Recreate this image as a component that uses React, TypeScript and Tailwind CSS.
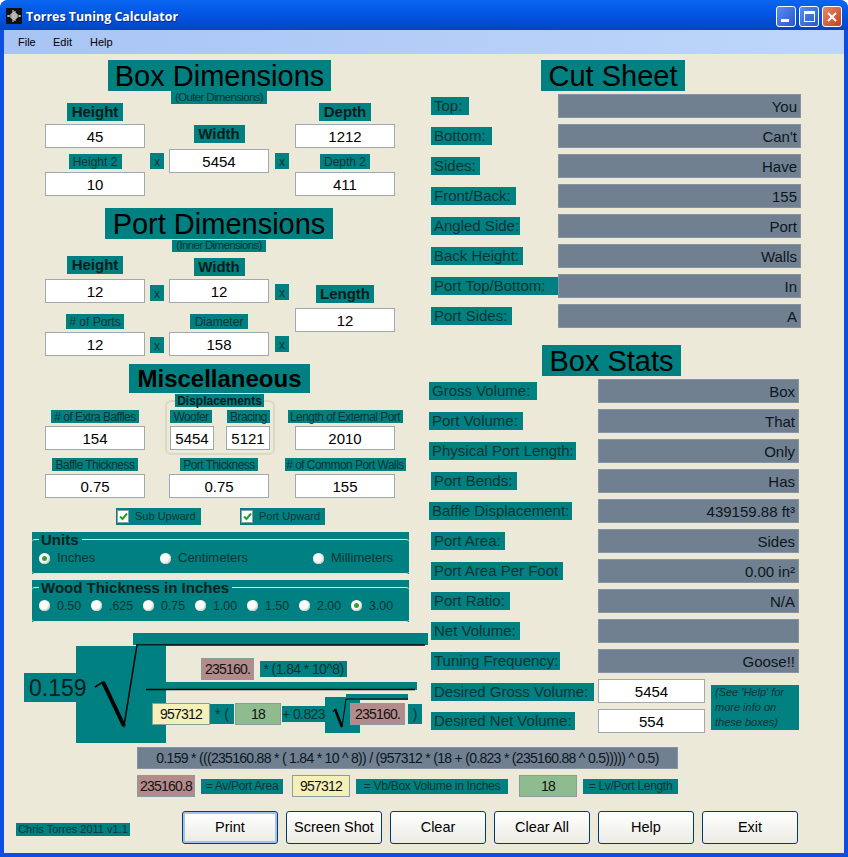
import React from 'react';

const Lbl = ({ w, h = 18, cls = 'text-[15px]', children }: { w: number; h?: number; cls?: string; children: React.ReactNode }) => (
  <div
    className={`bg-[#008080] text-[#0a3434] flex items-center justify-center whitespace-nowrap shrink-0 ${cls}`}
    style={{ width: w, height: h }}
  >
    {children}
  </div>
);

const Bold = ({ w, children }: { w: number; children: React.ReactNode }) => (
  <Lbl w={w} cls="text-[15px] font-bold text-[#021c1c] pt-[1px]">{children}</Lbl>
);

const Small = ({ w, h = 15, children }: { w: number; h?: number; children: React.ReactNode }) => (
  <Lbl w={w} h={h} cls="text-[12px] pt-[1px]">{children}</Lbl>
);

const Tiny = ({ w, children }: { w: number; children: React.ReactNode }) => (
  <Lbl w={w} h={13} cls="text-[12px] tracking-[-0.55px]">{children}</Lbl>
);

const Heading = ({ w, children }: { w: number; children: React.ReactNode }) => (
  <div
    className="bg-[#008080] text-black text-[29px] h-[31px] pt-[2px] flex items-center justify-center whitespace-nowrap"
    style={{ width: w }}
  >
    {children}
  </div>
);

const Input = ({ value, w = 100 }: { value: string; w?: number }) => (
  <div
    className="h-[24px] pt-[2px] bg-white border border-[#a0a8b0] text-black text-[15px] flex items-center justify-center shrink-0"
    style={{ width: w }}
  >
    {value}
  </div>
);

const X = () => (
  <div className="w-[14px] h-[16px] pt-[1px] bg-[#008080] text-[#0a3434] text-[12px] flex items-center justify-center">x</div>
);

const Radio = ({ on }: { on?: boolean }) => (
  <span className="w-[11px] h-[11px] rounded-full bg-white shadow-[inset_-1px_-1px_2px_#c4c8b8] flex items-center justify-center shrink-0">
    {on && <span className="w-[5px] h-[5px] rounded-full bg-[#3f9a3a]" />}
  </span>
);

const Opt = ({ label, on, w, cls = 'text-[13px]' }: { label: string; on?: boolean; w: number; cls?: string }) => (
  <div className="flex items-center gap-[7px]" style={{ width: w }}>
    <Radio on={on} />
    <span className={`${cls} text-[#0a3434]`}>{label}</span>
  </div>
);

const Check = ({ label, cls }: { label: string; cls: string }) => (
  <div className={`h-[17px] w-[85px] bg-[#008080] flex items-center pl-[1px] gap-[6px] text-[11px] whitespace-nowrap text-[#0a3434] ${cls}`}>
    <span className="w-[12px] h-[13px] bg-white border border-[#8aa0a8] flex items-center justify-center shrink-0">
      <svg width="9" height="9" viewBox="0 0 9 9">
        <path d="M1 4.5 L3.5 7 L8 1.5" fill="none" stroke="#21a121" strokeWidth="2" />
      </svg>
    </span>
    {label}
  </div>
);

const Panel = ({ title, children }: { title: string; children: React.ReactNode }) => (
  <div className="ml-[28px] w-[377px] h-[42px] bg-[#008080] pt-[7px]">
    <div className="relative h-[35px] border-y border-[#d4e8e4] rounded-[3px] flex items-center pt-[3px] pl-[7px]">
      <span className="absolute left-[7px] -top-[7px] bg-[#008080] pl-[2px] pr-[3px] text-[15px] leading-[14px] font-bold text-[#051f1f]">
        {title}
      </span>
      {children}
    </div>
  </div>
);

const Value = ({ w, children }: { w: number; children?: React.ReactNode }) => (
  <div
    className="h-[24px] pt-[2px] bg-[#708090] border border-[#8494a4] text-[#0c1620] text-[15px] flex items-center justify-end pr-[3px] shrink-0"
    style={{ width: w }}
  >
    {children}
  </div>
);

const RowLbl = ({ w, children }: { w: number; children: React.ReactNode }) => (
  <Lbl w={w} cls="text-[15px] justify-start pl-[3px] pt-[1px]">{children}</Lbl>
);

const cut = [
  ['Top:', 38, 'You'],
  ['Bottom:', 61, "Can't"],
  ['Sides:', 49, 'Have'],
  ['Front/Back:', 85, '155'],
  ['Angled Side:', 89, 'Port'],
  ['Back Height:', 92, 'Walls'],
  ['Port Top/Bottom:', 127, 'In'],
  ['Port Sides:', 81, 'A'],
] as const;

const stats = [
  ['Gross Volume:', 108, 'Box', 0],
  ['Port Volume:', 94, 'That', 0],
  ['Physical Port Length:', 147, 'Only', 0],
  ['Port Bends:', 86, 'Has', 2],
  ['Baffle Displacement:', 143, '439159.88 ft³', 0],
  ['Port Area:', 74, 'Sides', 2],
  ['Port Area Per Foot', 132, '0.00 in²', 2],
  ['Port Ratio:', 79, 'N/A', 2],
  ['Net Volume:', 89, '', 2],
  ['Tuning Frequency:', 129, 'Goose!!', 2],
] as const;

const chip = 'h-[22px] pt-[1px] border border-[#8c9ca0] text-[14px] tracking-[-0.8px] text-[#111] flex items-center justify-center shrink-0';

const Formula = () => (
  <div className="relative h-[125px]">
    <div className="absolute left-[129px] top-[11px] w-[295px] h-[12px] bg-[#008080]" />
    <div className="absolute left-[72px] top-[24px] w-[90px] h-[97px] bg-[#008080]" />
    <div className="absolute left-[20px] top-[51px] w-[52px] h-[29px] bg-[#008080]" />
    <div className="absolute left-[162px] top-[60px] w-[251px] h-[8px] bg-[#008080]" />
    <div className="absolute left-[321px] top-[75px] w-[35px] h-[36px] bg-[#008080]" />
    <div className="absolute left-[342px] top-[72px] w-[62px] h-[6px] bg-[#008080]" />
    <span className="absolute left-[25px] top-[53px] text-[23px] leading-[27px] text-[#051f1f]">0.159</span>
    <svg className="absolute left-0 top-0" width="425" height="125" viewBox="0 0 425 125">
      <path d="M91 65 L99 60 L120 104 L133 23 H421" fill="none" stroke="#000" strokeWidth="1.5" />
      <path d="M99 60 L120 104" fill="none" stroke="#000" strokeWidth="4" />
      <path d="M142 67.5 H411" fill="none" stroke="#000" strokeWidth="1.5" />
      <path d="M329 90 L331 87 L338 105 L342 77 H404" fill="none" stroke="#000" strokeWidth="1" />
      <path d="M331 87 L338 105" fill="none" stroke="#000" strokeWidth="2.5" />
    </svg>
    <div className="relative pt-[36px] pl-[197px] flex items-center">
      <div className={`${chip} w-[53px] bg-[#b38b8b]`}>235160.</div>
      <Lbl w={87} h={16} cls="text-[14px] tracking-[-0.6px] ml-[6px]">* (1.84 * 10^8)</Lbl>
    </div>
    <div className="relative mt-[23px] pl-[148px] flex items-center">
      <div className={`${chip} w-[58px] bg-[#f5f0b8]`}>957312</div>
      <Lbl w={24} h={20} cls="text-[14px]">* (</Lbl>
      <div className={`${chip} w-[46px] ml-[1px] bg-[#8fbc8f]`}>18</div>
      <Lbl w={43} h={16} cls="text-[14px] tracking-[-0.6px] ml-[1px]">+ 0.823</Lbl>
      <div className={`${chip} w-[55px] ml-[25px] bg-[#b38b8b]`}>235160.</div>
      <Lbl w={14} h={20} cls="text-[14px] ml-[3px]">)</Lbl>
    </div>
  </div>
);

const App = () => {
  return (
    <div className="w-[848px] h-[857px] bg-white font-['Liberation_Sans',sans-serif] overflow-hidden">
      <div className="h-full rounded-t-[8px] bg-[#0a4fe0] flex flex-col">
        {/* title bar */}
        <div className="h-[30px] rounded-t-[8px] bg-gradient-to-b from-[#0a66f0] via-[#0254e2] to-[#0444c4] flex items-center pl-[6px] pr-[6px]">
          <svg className="mt-[2px]" width="16" height="16" viewBox="0 0 16 16">
            <rect width="16" height="16" fill="#111" />
            <path d="M1 8H3M3 7V9M5 6V10M6 5V11M7 2V14M8 4V12M9 3V13M10 5V11M11 6V10M13 7V9M13 8H15" stroke="#eee" strokeWidth="1" />
          </svg>
          <span className="ml-[4px] mt-[5px] text-white text-[12.4px] font-bold font-['Open_Sans',sans-serif] [text-shadow:1px_1px_0_#0a2a80]">
            Torres Tuning Calculator
          </span>
          <div className="ml-auto mt-[3px] flex gap-[3px]">
            <div className="w-[20px] h-[21px] rounded-[3px] border border-white bg-gradient-to-br from-[#5a8cf0] to-[#2a56d0] flex items-end pl-[4px] pb-[4px]">
              <span className="w-[8px] h-[3px] bg-white" />
            </div>
            <div className="w-[20px] h-[21px] rounded-[3px] border border-white bg-gradient-to-br from-[#5a8cf0] to-[#2a56d0] flex items-center justify-center">
              <span className="w-[11px] h-[11px] border border-white border-t-[3px]" />
            </div>
            <div className="w-[20px] h-[21px] rounded-[3px] border border-white bg-gradient-to-br from-[#e8866a] to-[#c0401c] flex items-center justify-center">
              <svg width="12" height="12" viewBox="0 0 12 12">
                <path d="M2 2L10 10M10 2L2 10" stroke="#fff" strokeWidth="2" />
              </svg>
            </div>
          </div>
        </div>

        <div className="flex-1 mx-[4px] mb-[4px] flex flex-col bg-[#ece9d8]">
          {/* menu */}
          <div className="h-[24px] bg-gradient-to-r from-[#a8c4f4] to-[#bed6fa] flex items-center text-[11px] text-black pl-[14px]">
            <span className="w-[35px]">File</span>
            <span className="w-[37px]">Edit</span>
            <span>Help</span>
          </div>

          <div className="flex h-[691px]">
            {/* left column */}
            <div className="w-[425px] shrink-0">
              <div className="mt-[6px] ml-[104px]"><Heading w={223}>Box Dimensions</Heading></div>
              <div className="ml-[167px]"><Lbl w={96} h={13} cls="text-[11.5px] tracking-[-0.65px]">(Outer Dimensions)</Lbl></div>

              <div className="-mt-[1px] ml-[41px] flex">
                <div className="w-[100px] flex flex-col items-center">
                  <Bold w={56}>Height</Bold>
                  <div className="mt-[3px]"><Input value="45" /></div>
                  <div className="mt-[6px]"><Small w={53}>Height 2</Small></div>
                  <div className="mt-[3px]"><Input value="10" /></div>
                </div>
                <div className="w-[24px] pt-[50px] flex justify-center"><X /></div>
                <div className="w-[100px] flex flex-col items-center pt-[22px]">
                  <Bold w={51}>Width</Bold>
                  <div className="mt-[6px]"><Input value="5454" /></div>
                </div>
                <div className="w-[26px] pt-[50px] flex justify-center"><X /></div>
                <div className="w-[100px] flex flex-col items-center">
                  <Bold w={52}>Depth</Bold>
                  <div className="mt-[3px]"><Input value="1212" /></div>
                  <div className="mt-[6px]"><Small w={50}>Depth 2</Small></div>
                  <div className="mt-[3px]"><Input value="411" /></div>
                </div>
              </div>

              <div className="mt-[12px] ml-[101px]"><Heading w={228}>Port Dimensions</Heading></div>
              <div className="mt-[1px] ml-[168px]"><Lbl w={94} h={12} cls="text-[11.5px] tracking-[-0.65px]">(Inner Dimensions)</Lbl></div>

              <div className="mt-[4px] ml-[41px] flex">
                <div className="w-[100px] flex flex-col items-center">
                  <Bold w={56}>Height</Bold>
                  <div className="mt-[5px]"><Input value="12" /></div>
                  <div className="mt-[11px]"><Small w={58}># of Ports</Small></div>
                  <div className="mt-[3px]"><Input value="12" /></div>
                </div>
                <div className="w-[24px] pt-[29px] flex flex-col items-center gap-[36px]"><X /><X /></div>
                <div className="w-[100px] flex flex-col items-center pt-[2px]">
                  <Bold w={51}>Width</Bold>
                  <div className="mt-[3px]"><Input value="12" /></div>
                  <div className="mt-[11px]"><Small w={58}>Diameter</Small></div>
                  <div className="mt-[3px]"><Input value="158" /></div>
                </div>
                <div className="w-[26px] pt-[28px] flex flex-col items-center gap-[36px]"><X /><X /></div>
                <div className="w-[100px] flex flex-col items-center pt-[29px]">
                  <Bold w={58}>Length</Bold>
                  <div className="mt-[5px]"><Input value="12" /></div>
                </div>
              </div>

              <div className="mt-[8px] ml-[125px] w-[181px] h-[29px] pt-[1px] bg-[#008080] text-black text-[24px] font-bold flex items-center justify-center">
                Miscellaneous
              </div>
              <div className="relative mt-[1px] ml-[171px] w-[89px]">
                <Lbl w={89} h={13} cls="text-[12px] font-bold text-[#021c1c]">Displacements</Lbl>
              </div>

              <div className="-mt-[7px] ml-[41px] flex">
                <div className="w-[100px] flex flex-col items-center pt-[10px]">
                  <Tiny w={88}># of Extra Baffles</Tiny>
                  <div className="mt-[3px]"><Input value="154" /></div>
                </div>
                <div className="ml-[20px] w-[110px] h-[55px] border-2 border-[#dcd8c6] rounded-[6px] px-[3px] pt-[8px]">
                  <div className="flex justify-between">
                    <Tiny w={42}>Woofer</Tiny>
                    <Tiny w={43}>Bracing</Tiny>
                  </div>
                  <div className="mt-[3px] flex justify-between">
                    <Input value="5454" w={44} />
                    <Input value="5121" w={44} />
                  </div>
                </div>
                <div className="ml-[20px] w-[100px] flex flex-col items-center pt-[10px]">
                  <Tiny w={115}>Length of External Port</Tiny>
                  <div className="mt-[3px]"><Input value="2010" /></div>
                </div>
              </div>

              <div className="mt-[3px] ml-[41px] flex">
                <div className="w-[100px] flex flex-col items-center">
                  <Tiny w={86}>Baffle Thickness</Tiny>
                  <div className="mt-[3px]"><Input value="0.75" /></div>
                </div>
                <div className="ml-[24px] w-[100px] flex flex-col items-center">
                  <Tiny w={78}>Port Thickness</Tiny>
                  <div className="mt-[3px]"><Input value="0.75" /></div>
                </div>
                <div className="ml-[26px] w-[100px] flex flex-col items-center">
                  <Tiny w={121}># of Common Port Walls</Tiny>
                  <div className="mt-[3px]"><Input value="155" /></div>
                </div>
              </div>

              <div className="mt-[10px] flex">
                <Check label="Sub Upward" cls="ml-[112px]" />
                <Check label="Port Upward" cls="ml-[39px]" />
              </div>

              <div className="mt-[7px]">
                <Panel title="Units">
                  <Opt label="Inches" on w={121} />
                  <Opt label="Centimeters" w={153} />
                  <Opt label="Millimeters" w={90} />
                </Panel>
              </div>
              <div className="mt-[6px]">
                <Panel title="Wood Thickness in Inches">
                  <Opt label="0.50" w={52} cls="text-[12.4px]" />
                  <Opt label=".625" w={52} cls="text-[12.4px]" />
                  <Opt label="0.75" w={52} cls="text-[12.4px]" />
                  <Opt label="1.00" w={52} cls="text-[12.4px]" />
                  <Opt label="1.50" w={52} cls="text-[12.4px]" />
                  <Opt label="2.00" w={52} cls="text-[12.4px]" />
                  <Opt label="3.00" on w={50} cls="text-[12.4px]" />
                </Panel>
              </div>

              <Formula />
            </div>

            {/* right column */}
            <div className="flex-1 relative">
              <div className="mt-[6px] ml-[112px]"><Heading w={144}>Cut Sheet</Heading></div>
              <div className="mt-[3px] flex flex-col gap-[6px]">
                {cut.map(([label, w, val]) => (
                  <div key={label} className="h-[24px] flex items-center pl-[2px]">
                    <div className="w-[127px]">
                      <RowLbl w={w}>{label}</RowLbl>
                    </div>
                    <Value w={243}>{val}</Value>
                  </div>
                ))}
              </div>

              <div className="mt-[17px] ml-[113px]"><Heading w={139}>Box Stats</Heading></div>
              <div className="mt-[3px] flex flex-col gap-[6px]">
                {stats.map(([label, w, val, pad]) => (
                  <div key={label} className="h-[24px] flex items-center">
                    <div className="w-[169px]">
                      <div className={pad ? 'ml-[2px]' : ''}>
                        <RowLbl w={w}>{label}</RowLbl>
                      </div>
                    </div>
                    <Value w={201}>{val}</Value>
                  </div>
                ))}
                <div className="flex">
                  <div className="w-[169px] pl-[2px] pt-[4px] flex flex-col gap-[11px]">
                    <RowLbl w={163}>Desired Gross Volume:</RowLbl>
                    <RowLbl w={144}>Desired Net Volume:</RowLbl>
                  </div>
                  <div className="flex flex-col gap-[6px]">
                    <Input value="5454" w={107} />
                    <Input value="554" w={107} />
                  </div>
                  <div className="ml-[6px] mt-[6px] w-[88px] h-[45px] bg-[#008080] text-[#0a3434] text-[11px] italic leading-[15px] pl-[4px] whitespace-nowrap">
                    (See 'Help' for<br />more info on<br />these boxes)
                  </div>
                </div>
              </div>
            </div>
          </div>

          {/* expression */}
          <div className="ml-[133px] w-[541px] h-[22px] pt-[1px] mt-[2px] bg-[#708090] border border-[#8494a4] text-[#0c1620] text-[14px] tracking-[-0.7px] flex items-center justify-center whitespace-nowrap">
            0.159 * (((235160.88 * ( 1.84 * 10 ^ 8)) / (957312 * (18 + (0.823 * (235160.88 ^ 0.5))))) ^ 0.5)
          </div>
          <div className="mt-[6px] ml-[133px] flex items-center">
            <div className={`${chip} w-[58px] bg-[#b38b8b]`}>235160.8</div>
            <Lbl w={82} h={15} cls="text-[12px] tracking-[-0.3px] ml-[6px]">= Av/Port Area</Lbl>
            <div className={`${chip} w-[58px] ml-[9px] bg-[#f5f0b8]`}>957312</div>
            <Lbl w={152} h={15} cls="text-[12px] tracking-[-0.3px] ml-[6px]">= Vb/Box Volume in Inches</Lbl>
            <div className={`${chip} w-[58px] ml-[11px] bg-[#8fbc8f]`}>18</div>
            <Lbl w={95} h={15} cls="text-[12px] tracking-[-0.3px] ml-[6px]">= Lv/Port Length</Lbl>
          </div>

          {/* buttons */}
          <div className="mt-[14px] flex items-end">
            <div className="ml-[12px] mb-[8px] w-[114px] h-[13px] bg-[#008080] text-[#0a3434] text-[11px] flex items-center justify-center whitespace-nowrap">
              Chris Torres 2011 v1.1
            </div>
            <div className="ml-[52px] flex gap-[8px]">
              {['Print', 'Screen Shot', 'Clear', 'Clear All', 'Help', 'Exit'].map((b, i) => (
                <button
                  key={b}
                  className={`w-[96px] h-[33px] pt-[1px] rounded-[3px] border border-[#003c74] bg-gradient-to-b from-white to-[#ecebe4] text-[14.5px] text-black ${i === 0 ? 'shadow-[inset_0_0_0_2px_#a6c2ea]' : ''}`}
                >
                  {b}
                </button>
              ))}
            </div>
          </div>
        </div>
      </div>
    </div>
  );
};

export default App;
